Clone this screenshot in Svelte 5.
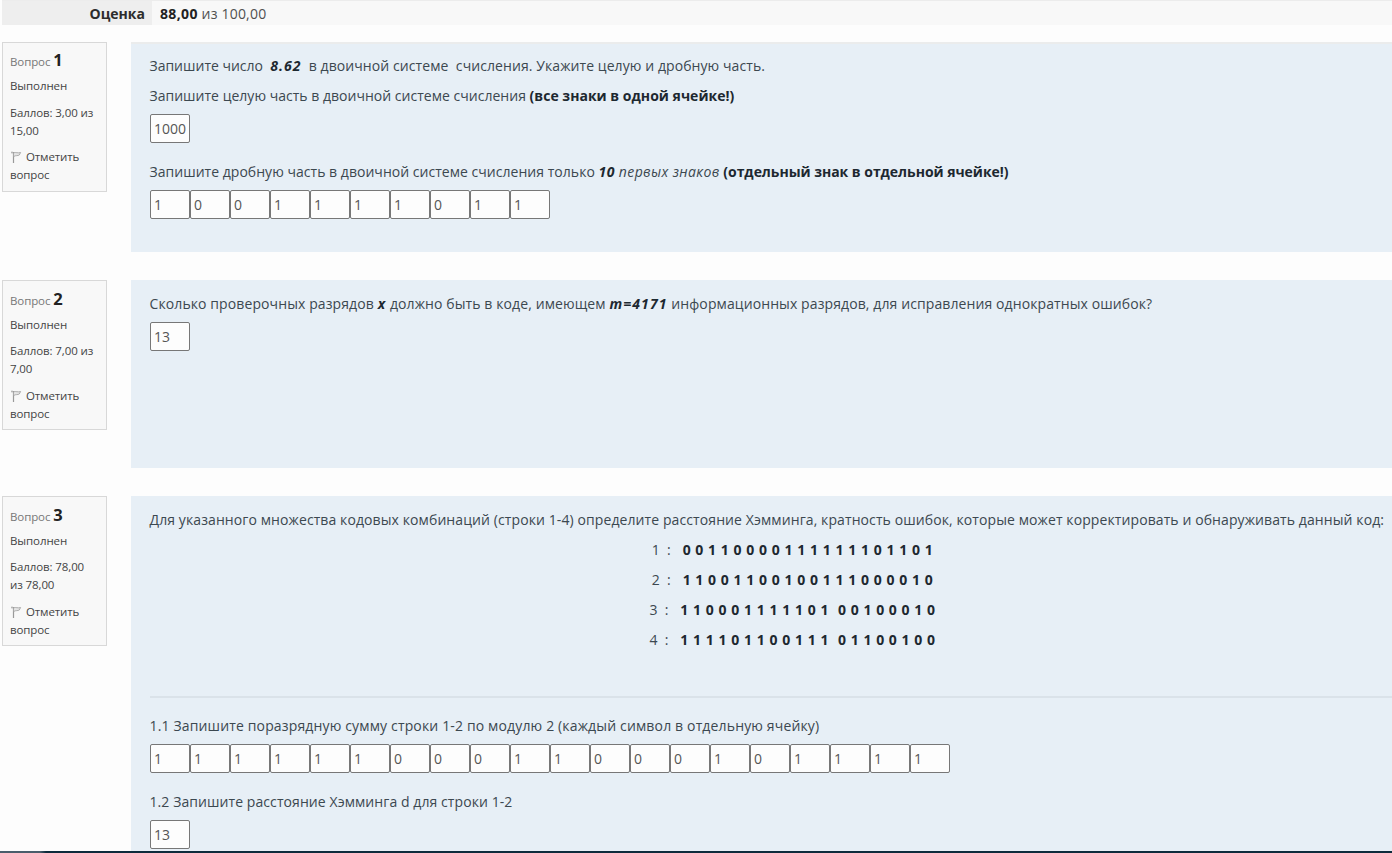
<script>
  const questions = [
    { n: 1, score: '3,00 из 15,00' },
    { n: 2, score: '7,00 из 7,00' },
    { n: 3, score: '78,00 из 78,00' }
  ];
  const fraction = '1001111011'.split('');
  const sum = '11111100011000101111'.split('');
  const rows = [
    '0 0 1 1 0 0 0 0 1 1 1 1 1 1 1 0 1 1 0 1',
    '1 1 0 0 1 1 0 0 1 0 0 1 1 1 0 0 0 0 1 0',
    '1 1 0 0 0 1 1 1 1 1 0 1 \u00a00 0 1 0 0 0 1 0',
    '1 1 1 1 0 1 1 0 0 1 1 1 \u00a00 1 1 0 0 1 0 0'
  ];
</script>

{#snippet cells(values)}
  <div class="cells">
    {#each values as v}<span class="cell">{v}</span>{/each}
  </div>
{/snippet}

<div class="page">
  <div class="grade">
    <div class="grade-label">Оценка</div>
    <div class="grade-value"><b>88,00</b> из 100,00</div>
  </div>

  {#each questions as q}
    <section class="question q{q.n}">
      <aside class="info">
        <div class="no">Вопрос <b>{q.n}</b></div>
        <div class="state">Выполнен</div>
        <div class="score">Баллов: {q.score}</div>
        <div class="flag">
          <svg width="13" height="12" viewBox="0 0 13 12"><path d="M3.500 1v11" stroke="#999" stroke-width="1.200" fill="none" /><path d="M3.800 1.800c2-.9 4 .7 6.800-.3L9.300 4c-1.500 1-3.500.2-5.500 1.400" fill="#e4e4e4" stroke="#a5a5a5" stroke-width=".9" /><circle cx="2" cy="1.500" r=".9" fill="#aaa" /></svg>
          Отметить вопрос
        </div>
      </aside>
      <div class="content">
        {#if q.n === 1}
          <p class="intro">Запишите число&nbsp; <b><i>8.62</i></b>&nbsp; <span>в двоичной системе&nbsp; счисления. Укажите целую и дробную часть.</span></p>
          <p class="whole">Запишите целую часть в двоичной системе счисления <b>(все знаки в одной ячейке!)</b></p>
          {@render cells(['1000'])}
          <p class="after frac">Запишите дробную часть в двоичной системе счисления только <i><b>10</b> первых знаков</i> <b>(отдельный знак в отдельной ячейке!)</b></p>
          {@render cells(fraction)}
        {:else if q.n === 2}
          <p class="check">Сколько проверочных разрядов <b><i>x</i></b> должно быть в коде, имеющем <b><i>m=4171</i></b> информационных разрядов, для исправления однократных ошибок?</p>
          {@render cells(['13'])}
        {:else}
          <p class="given">Для указанного множества кодовых комбинаций (строки 1-4) определите расстояние Хэмминга, кратность ошибок, которые может корректировать и обнаруживать данный код:</p>
          {#each rows as r, i}
            <p class="code">{i + 1}&nbsp; :&nbsp;&nbsp; <b>{r}</b></p>
          {/each}
          <hr />
          <p class="sum">1.1 Запишите поразрядную сумму строки 1-2 по модулю 2 (каждый символ в отдельную ячейку)</p>
          {@render cells(sum)}
          <p class="after dist">1.2 Запишите расстояние Хэмминга d для строки 1-2</p>
          {@render cells(['13'])}
        {/if}
      </div>
    </section>
  {/each}
  <div class="taskbar"></div>
</div>

<style>
  :global(body) { background: #fdfdfd; overflow: hidden; }
  .page {
    width: 1392px; height: 853px; overflow: hidden; position: relative;
    font-family: "Open Sans", sans-serif; font-size: 14px; line-height: 20px; color: #3c4850;
    white-space: nowrap;
  }
  .grade { display: flex; height: 25px; margin: 0 0 17px 2px; background: #f8f8f8; color: #505050; border-top: 1px solid #ececec; box-sizing: border-box; }
  .grade-label { width: 150px; box-sizing: border-box; padding: 3px 7px 0 0; text-align: right; font-weight: 700; background: #eee; color: #2c2c2c; }
  .grade-value { padding: 3px 0 0 8px; letter-spacing: .2px; }
  .grade-value b { color: #222; letter-spacing: .35px; }
  .question { display: flex; align-items: flex-start; gap: 24px; padding-left: 2px; }
  .q1 { height: 238px; }
  .q2 { height: 216px; }
  .info {
    width: 105px; height: 150px; box-sizing: border-box; flex: none; padding: 8px 7px;
    background: #f8f8f8; border: 1px solid #d8d8d8; color: #444;
    font-size: 11.5px; line-height: 18px; white-space: normal; letter-spacing: -.1px;
  }
  .q2 .info, .q3 .info { padding-top: 9px; }
  .no { height: 18px; color: #777; margin-bottom: 8px; }
  .no b { font-size: 16.5px; color: #222; }
  .state { margin-bottom: 9px; }
  .score { margin-bottom: 8px; }
  .q2 .state, .q3 .state { margin-bottom: 8px; }
  .q2 .score, .q3 .score { margin-bottom: 9px; }
  .flag svg { vertical-align: -2px; }
  .content {
    flex: 1; box-sizing: border-box; padding: 14px 0 0 19px; background: #e7eff6;
  }
  .q1 .content { height: 210px; border-top: 2px solid #ebecec; padding-top: 12px; }
  .q2 .content { height: 188px; }
  .q3 .content { height: 357px; }
  p { margin: 0 0 10px -.5px; }
  p b { color: #1d2830; }
  .intro b { letter-spacing: 1px; }
  .intro span { letter-spacing: .08px; }
  .whole { letter-spacing: .02px; }
  .frac { letter-spacing: .03px; }
  .frac i { letter-spacing: .4px; }
  .frac > b { letter-spacing: -.03px; }
  .check { letter-spacing: .1px; }
  .check b { letter-spacing: 1.1px; }
  .given { letter-spacing: .095px; }
  .sum { letter-spacing: .15px; }
  .dist { letter-spacing: .08px; }
  .cells { display: flex; height: 28px; margin-top: -2px; }
  .cell {
    width: 40px; height: 29px; box-sizing: border-box; padding: 4px 0 0 3px;
    border: 1px solid #777; border-radius: 2px; background: #fdfdfd; color: #555;
  }
  .after { margin-top: 20px; }
  .code { text-align: center; white-space: pre; padding-left: 43px; }
  .code b { word-spacing: 1.1px; margin-left: 1px; }
  hr { border: 0; height: 2px; margin: 46px 0 18px; background: #dae2e9; }
  .taskbar { position: absolute; left: 0; right: 0; bottom: 0; height: 2px; background: linear-gradient(90deg, #4a5d6b 40px, #0d2b3c 46px); }
</style>
